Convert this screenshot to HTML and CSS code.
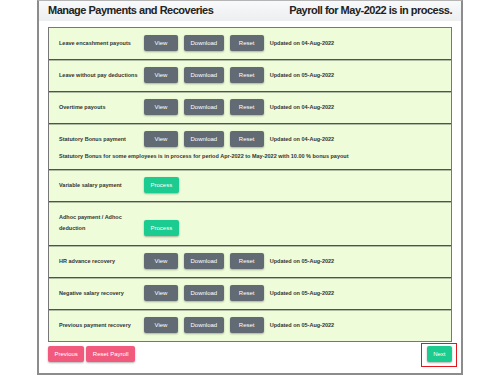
FILE: index.html
```
<!DOCTYPE html>
<html lang="en">
<head>
    <meta charset="UTF-8">
    <title>Manage Payments and Recoveries</title>
    <link rel="stylesheet" href="styles.css">
</head>
<body>
<div class="panel">
    <div class="panel-head">
        <h1 class="title">Manage Payments and Recoveries</h1>
        <h2 class="status">Payroll for May-2022 is in process.</h2>
    </div>
    <div class="panel-body">
        <div class="items">
            <div class="item">
                <div class="line">
                    <span class="label">Leave encashment payouts</span>
                    <button class="btn grey">View</button>
                    <button class="btn grey">Download</button>
                    <button class="btn grey">Reset</button>
                    <span class="updated">Updated on 04-Aug-2022</span>
                </div>
            </div>
            <div class="item">
                <div class="line">
                    <span class="label">Leave without pay deductions</span>
                    <button class="btn grey">View</button>
                    <button class="btn grey">Download</button>
                    <button class="btn grey">Reset</button>
                    <span class="updated">Updated on 05-Aug-2022</span>
                </div>
            </div>
            <div class="item">
                <div class="line">
                    <span class="label">Overtime payouts</span>
                    <button class="btn grey">View</button>
                    <button class="btn grey">Download</button>
                    <button class="btn grey">Reset</button>
                    <span class="updated">Updated on 04-Aug-2022</span>
                </div>
            </div>
            <div class="item">
                <div class="line">
                    <span class="label">Statutory Bonus payment</span>
                    <button class="btn grey">View</button>
                    <button class="btn grey">Download</button>
                    <button class="btn grey">Reset</button>
                    <span class="updated">Updated on 04-Aug-2022</span>
                </div>
                <p class="note">Statutory Bonus for some employees is in process for period Apr-2022 to May-2022 with 10.00 % bonus payout</p>
            </div>
            <div class="item">
                <div class="line">
                    <span class="label">Variable salary payment</span>
                    <button class="btn green">Process</button>
                </div>
            </div>
            <div class="item tall">
                <div class="line">
                    <span class="label">Adhoc payment / Adhoc deduction</span>
                    <button class="btn green">Process</button>
                </div>
            </div>
            <div class="item">
                <div class="line">
                    <span class="label">HR advance recovery</span>
                    <button class="btn grey">View</button>
                    <button class="btn grey">Download</button>
                    <button class="btn grey">Reset</button>
                    <span class="updated">Updated on 05-Aug-2022</span>
                </div>
            </div>
            <div class="item">
                <div class="line">
                    <span class="label">Negative salary recovery</span>
                    <button class="btn grey">View</button>
                    <button class="btn grey">Download</button>
                    <button class="btn grey">Reset</button>
                    <span class="updated">Updated on 05-Aug-2022</span>
                </div>
            </div>
            <div class="item">
                <div class="line">
                    <span class="label">Previous payment recovery</span>
                    <button class="btn grey">View</button>
                    <button class="btn grey">Download</button>
                    <button class="btn grey">Reset</button>
                    <span class="updated">Updated on 05-Aug-2022</span>
                </div>
            </div>
        </div>
        <div class="actions">
            <div class="actions-left">
                <button class="btn pink">Previous</button>
                <button class="btn pink">Reset Payroll</button>
            </div>
            <button class="btn green next">Next</button>
        </div>
    </div>
</div>
</body>
</html>
```

FILE: styles.css
```
*{
    margin:0;
    padding:0;
    box-sizing:border-box;
}
body{
    background:#fff;
    font-family:"Liberation Sans", Arial, Helvetica, sans-serif;
    color:#333;
}
.panel{
    margin-left:37px;
    width:426px;
    border:2px solid #8c8c8c;
    border-top:1px solid #b5b5b5;
    background:#fff;
}
.panel-head{
    display:flex;
    justify-content:space-between;
    align-items:baseline;
    padding:3px 9px 4px;
    height:20px;
    background:linear-gradient(#f8f9fa,#eceef0);
}
.title,.status{
    font-size:11px;
    line-height:13px;
    font-weight:bold;
    letter-spacing:-0.5px;
    color:#222;
}
.panel-body{
    padding:6px 9px 11px;
}
.items{
    border:1px solid #777;
    background:#eefcd9;
}
.item{
    padding:7px 10px 8px;
    border-bottom:1px solid #4f5350;
    box-shadow:0 1px 0 rgba(60,60,60,.35);
}
.item:last-child{
    border-bottom:0;
    box-shadow:none;
}
.item.tall{
    padding-top:10px;
    padding-bottom:9px;
}
.line{
    display:flex;
    align-items:last baseline;
    gap:6px;
}
.label{
    flex:0 0 79px;
    margin-right:0;
    font-size:5.5px;
    line-height:11px;
    font-weight:bold;
    color:#333;
}
.updated{
    font-size:5.5px;
    font-weight:bold;
    color:#333;
}
.note{
    margin-top:4px;
    font-size:5.5px;
    line-height:10px;
    font-weight:bold;
    color:#333;
}
.btn{
    height:16px;
    padding:0 6.5px;
    border:0;
    border-radius:2px;
    font-family:"Liberation Sans", Arial, Helvetica, sans-serif;
    font-size:6px;
    line-height:16px;
    color:#fff;
    box-shadow:0 1px 2px rgba(0,0,0,.3);
}
.line .btn{
    min-width:34px;
}
.grey{
    background:#626a73;
}
.green{
    background:#1ccb8f;
}
.pink{
    background:#f25a7d;
}
.actions{
    display:flex;
    justify-content:space-between;
    margin-top:4px;
}
.actions-left{
    display:flex;
    gap:2px;
}
.next{
    position:relative;
}
.next::after{
    content:"";
    position:absolute;
    top:-3.5px;
    bottom:-4.5px;
    left:-6px;
    right:-5px;
    border:1.5px solid #e2161f;
}
```
